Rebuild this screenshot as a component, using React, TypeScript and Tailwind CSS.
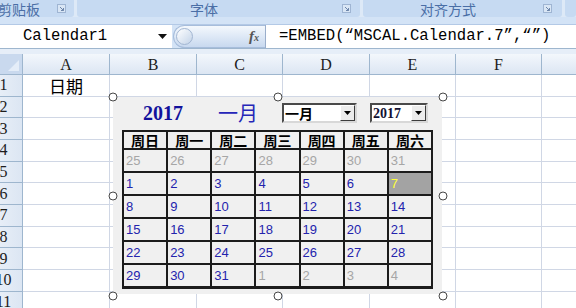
import type { ReactNode } from "react";

const sheetCols = [
  { label: "A", w: "w-[87px]" },
  { label: "B", w: "w-[87px]" },
  { label: "C", w: "w-[86px]" },
  { label: "D", w: "w-[87px]" },
  { label: "E", w: "w-[86px]" },
  { label: "F", w: "w-[86px]" },
  { label: "", w: "w-[86px]" }
];

const rowNums = [1, 2, 3, 4, 5, 6, 7, 8, 9, 10, 11];

const weekDays = ["周日", "周一", "周二", "周三", "周四", "周五", "周六"];

type Day = { n: number; muted?: boolean; selected?: boolean };

const days: Day[] = [
  ...[25, 26, 27, 28, 29, 30, 31].map((n) => ({ n, muted: true })),
  ...Array.from({ length: 28 }, (_, i) => ({ n: i + 1, selected: i === 6 })),
  { n: 29 },
  { n: 30 },
  { n: 31 },
  ...[1, 2, 3, 4].map((n) => ({ n, muted: true }))
];

function Launcher() {
  return (
    <svg width="9" height="9" viewBox="0 0 9 9" className="shrink-0">
      <rect x="0.5" y="0.5" width="8" height="8" fill="#d9e6f5" stroke="#9fb5d3" />
      <path d="M3 3 L6.5 6.5 M6.5 4 V6.5 H4" stroke="#6d86ab" strokeWidth="1" fill="none" />
    </svg>
  );
}

function Ribbon() {
  return (
    <div className="flex h-[17px] bg-[#dde9f7] text-[14px] leading-none text-[#4a6ea6]">
      <div className="flex w-[74px] items-center rounded-b-[3px] bg-[#c6daf2] pr-[8px]">
        <span className="-ml-[2px]">剪贴板</span>
        <span className="flex-1" />
        <Launcher />
      </div>
      <div className="ml-[3px] flex w-[283px] items-center rounded-b-[3px] bg-[#c6daf2] pl-[113px] pr-[9px]">
        <span>字体</span>
        <span className="flex-1" />
        <Launcher />
      </div>
      <div className="ml-[3px] flex w-[199px] items-center rounded-b-[3px] bg-[#c6daf2] pl-[57px] pr-[10px]">
        <span>对齐方式</span>
        <span className="flex-1" />
        <Launcher />
      </div>
      <div className="ml-[3px] flex-1 rounded-b-[3px] bg-[#c6daf2]" />
    </div>
  );
}

function FormulaBar() {
  return (
    <>
      <div className="h-[8px] border-b border-[#b3c9e6] bg-[#d3e3f6]" />
      <div className="flex h-[23px] bg-[#d3e3f6] font-['Liberation_Mono',monospace] text-[15.6px] leading-none text-black">
        <div className="flex w-[172px] items-center bg-white pl-[23px] pr-[5px]">
          <span>Calendar1</span>
          <span className="flex-1" />
          <svg width="9" height="5" viewBox="0 0 9 5">
            <path d="M0 0 H9 L4.5 5 Z" fill="#111" />
          </svg>
        </div>
        <div className="ml-[1px] flex w-[92px] items-center rounded-l-full border border-r-0 border-[#a7bddb] bg-gradient-to-b from-[#f4f8fd] to-[#c8d9ef]">
          <span className="ml-[2px] h-[17px] w-[17px] rounded-full border border-[#a2b6d2] bg-gradient-to-br from-[#ffffff] to-[#c3d3e8]" />
          <span className="flex-1" />
          <span className="mr-[6px] font-['Liberation_Serif',serif] text-[15px] font-bold italic text-[#555]">
            f<span className="text-[10px]">x</span>
          </span>
        </div>
        <div className="flex flex-1 items-center border-l border-[#9aaecb] bg-white pl-[13px]">
          =EMBED(“MSCAL.Calendar.7”,“”)
        </div>
      </div>
      <div className="h-[6px] border-t border-[#9eb6ce] bg-[#e6eef8]" />
    </>
  );
}

function Sheet() {
  return (
    <div className="-ml-[15px] font-['Liberation_Serif',serif] text-[16px] leading-none text-[#1d1d1d]">
      <div className="flex h-[21px]">
        <div className="relative w-[38px] shrink-0 border-r border-b border-[#9eb6ce] bg-[#c9d9ee]">
          <svg width="11" height="11" viewBox="0 0 11 11" className="absolute bottom-[3px] right-[3px]">
            <path d="M11 0 V11 H0 Z" fill="#e4edf8" />
          </svg>
        </div>
        {sheetCols.map((c, i) => (
          <div
            key={i}
            className={`${c.w} flex shrink-0 items-center justify-center border-r border-b border-[#9eb6ce] bg-gradient-to-b from-[#f3f7fc] to-[#dce6f3] pt-[2px]`}
          >
            {c.label}
          </div>
        ))}
      </div>
      {rowNums.map((r) => (
        <div key={r} className="flex h-[21.67px]">
          <div className="flex w-[38px] shrink-0 items-center justify-center border-r border-b border-[#9eb6ce] bg-gradient-to-r from-[#eef3fa] to-[#dce6f3]">
            {r}
          </div>
          {sheetCols.map((c, i) => (
            <div
              key={i}
              className={`${c.w} flex shrink-0 items-center justify-center border-r border-b border-[#d0d7e5] font-['Noto_Sans_CJK_SC',sans-serif] text-[17px] text-black`}
            >
              {r === 1 && c.label === "A" ? "日期" : null}
            </div>
          ))}
        </div>
      ))}
    </div>
  );
}

function DropButton() {
  return (
    <span className="flex h-[16px] w-[15px] shrink-0 items-center justify-center border border-t-white border-l-white border-r-[#3c3c3c] border-b-[#3c3c3c] bg-[#ececec]">
      <svg width="7" height="4" viewBox="0 0 7 4">
        <path d="M0 0 H7 L3.5 4 Z" fill="#000" />
      </svg>
    </span>
  );
}

function Select({ width, children }: { width: string; children: ReactNode }) {
  return (
    <div
      className={`${width} flex h-[20px] items-center border-2 border-t-[#4a4a4a] border-l-[#4a4a4a] border-r-[#d8d8d8] border-b-[#d8d8d8] bg-white pl-[1px]`}
    >
      <span className="flex-1 text-[14px] font-bold leading-none text-black">{children}</span>
      <DropButton />
    </div>
  );
}

const handleSpots = [
  "left-0 top-0",
  "left-[165px] top-0",
  "left-[330px] top-0",
  "left-0 top-[99px]",
  "left-[330px] top-[99px]",
  "left-0 top-[199px]",
  "left-[165px] top-[199px]",
  "left-[330px] top-[199px]"
];

function CalendarControl() {
  return (
    <div className="absolute left-[113px] top-[97px] h-[197px] w-[329px] bg-[#f0f0f0] font-['Noto_Sans_CJK_SC',sans-serif]">
      <div className="mt-[6px] flex h-[20px] items-center pl-[30px]">
        <span className="w-[75px] font-['Liberation_Serif',serif] text-[20px] font-bold leading-none text-[#12129c]">
          2017
        </span>
        <span className="w-[64px] text-[20px] leading-none text-[#2626b8]">一月</span>
        <Select width="w-[75px]">一月</Select>
        <span className="w-[13px]" />
        <Select width="w-[58px]">
          <span className="font-['Liberation_Serif',serif] text-[#111133]">2017</span>
        </Select>
      </div>
      <div className="ml-[9px] mt-[7px] grid w-[311px] grid-cols-7 gap-[2px] border-2 border-b-[3px] border-[#1c1c1c] bg-[#1c1c1c]">
        {weekDays.map((d) => (
          <div
            key={d}
            className="flex h-[16px] items-center justify-center bg-[#f0f0f0] text-[14px] font-bold leading-none text-black"
          >
            {d}
          </div>
        ))}
        {days.map((d, i) => (
          <div
            key={i}
            className={`flex h-[21px] items-center pl-[2px] font-['Liberation_Sans',sans-serif] text-[13px] leading-none ${
              d.selected
                ? "bg-[#a3a3a3] text-[#ffff3a]"
                : d.muted
                ? "bg-[#f0f0f0] text-[#a6a6a6]"
                : "bg-[#f0f0f0] text-[#2323ad]"
            }`}
          >
            {d.n}
          </div>
        ))}
      </div>
      {handleSpots.map((pos) => (
        <span
          key={pos}
          className={`absolute ${pos} h-[9px] w-[9px] -translate-x-1/2 -translate-y-1/2 rounded-full border border-[#474747] bg-white`}
        />
      ))}
    </div>
  );
}

export default function App() {
  return (
    <div className="relative h-[308px] w-[576px] overflow-hidden bg-white font-['Noto_Sans_CJK_SC',sans-serif]">
      <Ribbon />
      <FormulaBar />
      <Sheet />
      <CalendarControl />
    </div>
  );
}
